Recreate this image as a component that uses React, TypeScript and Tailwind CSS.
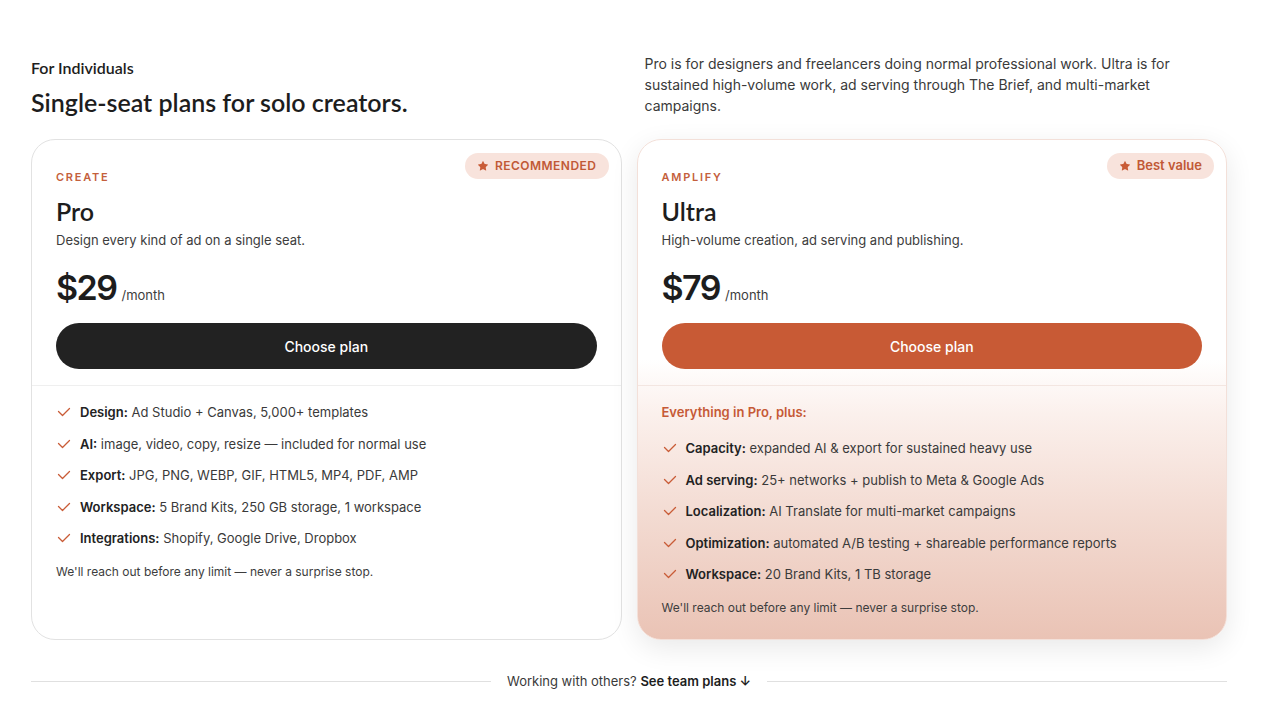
import { Star } from "lucide-react";

const PRO_FEATURES = [
  ["Design:", "Ad Studio + Canvas, 5,000+ templates"],
  ["AI:", "image, video, copy, resize — included for normal use"],
  ["Export:", "JPG, PNG, WEBP, GIF, HTML5, MP4, PDF, AMP"],
  ["Workspace:", "5 Brand Kits, 250 GB storage, 1 workspace"],
  ["Integrations:", "Shopify, Google Drive, Dropbox"],
];

const ULTRA_FEATURES = [
  ["Capacity:", "expanded AI & export for sustained heavy use"],
  ["Ad serving:", "25+ networks + publish to Meta & Google Ads"],
  ["Localization:", "AI Translate for multi-market campaigns"],
  ["Optimization:", "automated A/B testing + shareable performance reports"],
  ["Workspace:", "20 Brand Kits, 1 TB storage"],
];

const display = "font-['Lato',sans-serif]";

function Check() {
  return (
    <svg width="14" height="10" viewBox="0 0 14 10" className="shrink-0">
      <polyline
        points="1.5,4.5 5.5,8.5 12.5,1.5"
        fill="none"
        stroke="#c95c37"
        strokeWidth="1.3"
        strokeLinecap="round"
        strokeLinejoin="round"
      />
    </svg>
  );
}

function FeatureList({ items }: { items: string[][] }) {
  return (
    <ul className="flex flex-col gap-[11.5px]">
      {items.map(([label, text]) => (
        <li key={label} className="flex items-center gap-[9px] text-[13px] leading-5 text-[#3a3a3a]">
          <span className="pl-px">
            <Check />
          </span>
          <span>
            <span className="font-semibold text-[#222]">{label}</span> {text}
          </span>
        </li>
      ))}
    </ul>
  );
}

function Badge({ text, upper }: { text: string; upper?: boolean }) {
  return (
    <div
      className={`absolute top-[13px] right-[12px] flex h-[26px] items-center gap-[6px] rounded-full bg-[#f8e3dc] px-3 text-[12px] font-semibold text-[#c15936] ${
        upper ? "tracking-[0.04em]" : "text-[13px]"
      }`}
    >
      <Star size={12} fill="#c95c37" strokeWidth={0} />
      {text}
    </div>
  );
}

function PlanTop({
  tier,
  name,
  desc,
  price,
  dark,
}: {
  tier: string;
  name: string;
  desc: string;
  price: string;
  dark?: boolean;
}) {
  return (
    <div className="px-6 pt-[29px] pb-4">
      <div className="text-[11px] font-semibold leading-4 tracking-[0.16em] text-[#c4603c]">{tier}</div>
      <div className={`${display} mt-[10px] text-[25px] font-semibold leading-8 text-[#1d1d1d]`}>{name}</div>
      <p className="mt-[3px] text-[13px] leading-5 text-[#3d3d3d]">{desc}</p>
      <div className="mt-[18px] flex items-baseline gap-[5px]">
        <span className="text-[34px] font-semibold leading-10 tracking-[-0.045em] text-[#1d1d1d]">{price}</span>
        <span className="text-[13px] text-[#3d3d3d]">/month</span>
      </div>
      <button
        className={`mt-[15px] h-[46px] w-full rounded-full text-[14px] font-medium text-white ${
          dark ? "bg-[#222222]" : "bg-[#c85a35]"
        }`}
      >
        Choose plan
      </button>
    </div>
  );
}

export default function App() {
  return (
    <div className="min-h-screen bg-white font-['Inter',sans-serif] text-[#1d1d1d]">
      <div className="ml-[31px] w-[1196px] pt-[53px] pb-10">
        <div className="grid grid-cols-2 gap-[15px]">
          <div className="pt-[3px]">
            <div className={`${display} text-[16px] font-semibold leading-6 text-[#1d1d1d]`}>For Individuals</div>
            <h1 className={`${display} mt-[6px] text-[25px] font-semibold leading-8 text-[#1d1d1d]`}>
              Single-seat plans for solo creators.
            </h1>
          </div>
          <p className="max-w-[540px] pl-2 text-[14px] leading-[21px] text-[#3a3a3a]">
            Pro is for designers and freelancers doing normal professional work. Ultra is for sustained
            high-volume work, ad serving through The Brief, and multi-market campaigns.
          </p>
        </div>

        <div className="mt-[21px] grid grid-cols-2 gap-[15px]">
          <div className="relative h-[501px] rounded-[24px] border border-[#e2e2e2] bg-white">
            <Badge text="RECOMMENDED" upper />
            <PlanTop tier="CREATE" name="Pro" desc="Design every kind of ad on a single seat." price="$29" dark />
            <div className="border-t border-[#efefef] px-6 pt-4">
              <FeatureList items={PRO_FEATURES} />
              <p className="mt-4 text-[12px] leading-4 text-[#3d3d3d]">
                We'll reach out before any limit — never a surprise stop.
              </p>
            </div>
          </div>

          <div className="relative h-[501px] rounded-[24px] border border-[#f3e0d9] bg-[linear-gradient(to_bottom,#ffffff_44%,#fbf0ec_55%,#f3dbd2_75%,#eac3b5_100%)] shadow-[0_8px_28px_rgba(0,0,0,0.09)]">
            <Badge text="Best value" />
            <PlanTop
              tier="AMPLIFY"
              name="Ultra"
              desc="High-volume creation, ad serving and publishing."
              price="$79"
            />
            <div className="border-t border-[#f3e6e1] px-6 pt-4">
              <div className="mb-4 text-[13px] font-semibold leading-5 text-[#c65a36]">Everything in Pro, plus:</div>
              <FeatureList items={ULTRA_FEATURES} />
              <p className="mt-4 text-[12px] leading-4 text-[#3d3d3d]">
                We'll reach out before any limit — never a surprise stop.
              </p>
            </div>
          </div>
        </div>

        <div className="mt-[31px] flex items-center gap-4">
          <div className="h-px flex-1 bg-[#e0e0e0]" />
          <div className="text-[13px] leading-5 text-[#3a3a3a]">
            Working with others? <span className="font-semibold text-[#1d1d1d]">See team plans ↓</span>
          </div>
          <div className="h-px flex-1 bg-[#e0e0e0]" />
        </div>
      </div>
    </div>
  );
}
